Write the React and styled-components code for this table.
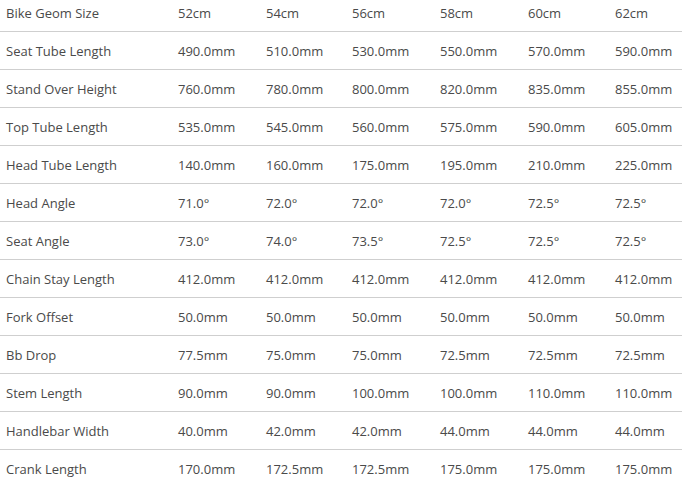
import React from "react";
import styled, { createGlobalStyle } from "styled-components";

const sizes = ["52cm", "54cm", "56cm", "58cm", "60cm", "62cm"];

const rows = [
  ["Seat Tube Length", ["490.0mm", "510.0mm", "530.0mm", "550.0mm", "570.0mm", "590.0mm"]],
  ["Stand Over Height", ["760.0mm", "780.0mm", "800.0mm", "820.0mm", "835.0mm", "855.0mm"]],
  ["Top Tube Length", ["535.0mm", "545.0mm", "560.0mm", "575.0mm", "590.0mm", "605.0mm"]],
  ["Head Tube Length", ["140.0mm", "160.0mm", "175.0mm", "195.0mm", "210.0mm", "225.0mm"]],
  ["Head Angle", ["71.0°", "72.0°", "72.0°", "72.0°", "72.5°", "72.5°"]],
  ["Seat Angle", ["73.0°", "74.0°", "73.5°", "72.5°", "72.5°", "72.5°"]],
  ["Chain Stay Length", ["412.0mm", "412.0mm", "412.0mm", "412.0mm", "412.0mm", "412.0mm"]],
  ["Fork Offset", ["50.0mm", "50.0mm", "50.0mm", "50.0mm", "50.0mm", "50.0mm"]],
  ["Bb Drop", ["77.5mm", "75.0mm", "75.0mm", "72.5mm", "72.5mm", "72.5mm"]],
  ["Stem Length", ["90.0mm", "90.0mm", "100.0mm", "100.0mm", "110.0mm", "110.0mm"]],
  ["Handlebar Width", ["40.0mm", "42.0mm", "42.0mm", "44.0mm", "44.0mm", "44.0mm"]],
  ["Crank Length", ["170.0mm", "172.5mm", "172.5mm", "175.0mm", "175.0mm", "175.0mm"]],
];

const GlobalStyle = createGlobalStyle`
  html, body {
    margin: 0;
    padding: 0;
    background: #fff;
    overflow: hidden;
  }
`;

const App = () => {
  return (
    <>
      <GlobalStyle />
      <Table>
        <Row>
          <Label>Bike Geom Size</Label>
          {sizes.map((s) => (
            <Cell key={s}>{s}</Cell>
          ))}
        </Row>
        {rows.map(([label, values]) => (
          <Row key={label}>
            <Label>{label}</Label>
            {values.map((v, i) => (
              <Cell key={i}>{v}</Cell>
            ))}
          </Row>
        ))}
      </Table>
    </>
  );
};
export default App;

const Table = styled.div`
  width: 700px;
  margin-top: -6px;
  font-family: "Open Sans", "Noto Sans", sans-serif;
  font-size: 13px;
  color: #4a4a4a;
`;

const Row = styled.div`
  display: grid;
  grid-template-columns: 172px 88px 86px 88px 88px 87px 87px;
  height: 37px;
  align-items: center;
  border-bottom: 1px solid #cfcfcf;
`;

const Label = styled.div`
  padding-left: 6px;
  white-space: nowrap;
`;

const Cell = styled.div`
  padding-left: 6px;
  white-space: nowrap;
`;
